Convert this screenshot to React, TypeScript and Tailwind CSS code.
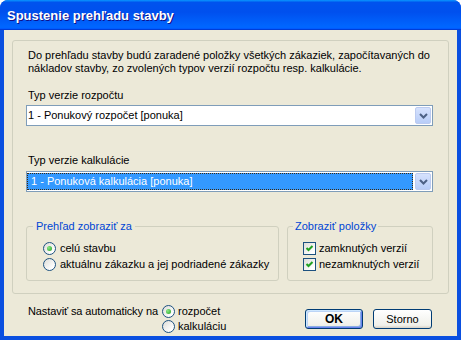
import React from 'react';

const Radio = ({ checked }: { checked?: boolean }) => (
  <span className="flex h-[13px] w-[13px] shrink-0 items-center justify-center rounded-full border border-[#1c5180] bg-[linear-gradient(135deg,#dcdcd7,#ffffff_80%)]">
    {checked && (
      <span className="h-[5px] w-[5px] rounded-full bg-[radial-gradient(circle_at_35%_35%,#8ae985,#21a121)]" />
    )}
  </span>
);

const Check = () => (
  <span className="flex h-[13px] w-[13px] shrink-0 items-center justify-center border border-[#1c5180] bg-[linear-gradient(135deg,#dcdcd7,#ffffff_80%)]">
    <svg width="9" height="9" viewBox="0 0 9 9">
      <path d="M1.5 4 L3.5 6 L7.5 2" stroke="#21a121" strokeWidth="2" fill="none" />
    </svg>
  </span>
);

const DropButton = () => (
  <div className="flex w-[16px] items-center justify-center rounded-[2px] border border-[#bccbf0] bg-[linear-gradient(180deg,#d6e2fd,#b8cdf8)]">
    <svg width="9" height="6" viewBox="0 0 9 6">
      <path d="M1 1 L4.5 4.5 L8 1" stroke="#4d6185" strokeWidth="2" fill="none" />
    </svg>
  </div>
);

const Combo = ({ text, selected }: { text: string; selected?: boolean }) => (
  <div className="flex h-[21px] items-stretch border border-[#7f9db9] bg-white py-[1px] pr-[1px]">
    {selected ? (
      <div className="mr-[2px] flex flex-1 items-center bg-[#3399ff] pl-[4px] text-white outline-1 outline-dotted outline-[#3d2a10] -outline-offset-1">
        {text}
      </div>
    ) : (
      <div className="mr-[2px] flex flex-1 items-center pl-[1px] text-black">{text}</div>
    )}
    <DropButton />
  </div>
);

export default function App() {
  return (
    <div className="flex h-[340px] w-[461px] flex-col rounded-t-[8px] bg-[#0a4fe0] font-['Liberation_Sans',Arial,sans-serif] text-[11px] leading-[13px] text-black">
      {/* Title bar */}
      <div className="flex h-[30px] items-center rounded-t-[8px] bg-[linear-gradient(180deg,#0997ff,#0053ee_8%,#0050ee_40%,#0066ff_88%,#0066ff_93%,#005bff_95%,#003dd7_96%,#003dd7)] pl-[7px]">
        <span className="text-[13px] font-bold text-white [text-shadow:1px_1px_#0f1089]">
          Spustenie prehľadu stavby
        </span>
      </div>

      {/* Body */}
      <div className="mx-[4px] mb-[4px] flex flex-1 flex-col bg-[#ece9d8] px-[8px] pt-[10px]">
        <div className="flex flex-col rounded-[3px] border border-[#d0d0bf] pb-[12px] pl-[13px] pr-[15px] pt-[8px]">
          <p className="pl-[2px]">
            Do prehľadu stavby budú zaradené položky všetkých zákaziek, započítavaných do
            <br />
            nákladov stavby, zo zvolených typov verzií rozpočtu resp. kalkulácie.
          </p>

          <div className="mt-[14px] pl-[2px]">Typ verzie rozpočtu</div>
          <div className="mt-[3px]">
            <Combo text="1 - Ponukový rozpočet [ponuka]" />
          </div>

          <div className="mt-[28px] pl-[2px]">Typ verzie kalkulácie</div>
          <div className="mt-[4px]">
            <Combo text="1 - Ponuková kalkulácia [ponuka]" selected />
          </div>

          <div className="mt-[28px] flex gap-[8px]">
            <fieldset className="w-[253px] rounded-[3px] border border-[#d0d0bf]">
              <legend className="ml-[6px] px-[3px] text-[#0046d5]">Prehľad zobraziť za</legend>
              <div className="pb-[8px] pl-[16px] pt-[7px]">
                <div className="flex h-[16px] items-center gap-[4px]">
                  <Radio checked />
                  <span>celú stavbu</span>
                </div>
                <div className="flex h-[16px] items-center gap-[4px]">
                  <Radio />
                  <span>aktuálnu zákazku a jej podriadené zákazky</span>
                </div>
              </div>
            </fieldset>
            <fieldset className="flex-1 rounded-[3px] border border-[#d0d0bf]">
              <legend className="ml-[5px] px-[2px] text-[#0046d5]">Zobraziť položky</legend>
              <div className="pb-[8px] pl-[15px] pt-[7px]">
                <div className="flex h-[16px] items-center gap-[3px]">
                  <Check />
                  <span>zamknutých verzií</span>
                </div>
                <div className="flex h-[16px] items-center gap-[3px]">
                  <Check />
                  <span>nezamknutých verzií</span>
                </div>
              </div>
            </fieldset>
          </div>
        </div>

        {/* Bottom row */}
        <div className="mt-[10px] flex items-start">
          <div className="flex h-[15px] w-[150px] items-center pl-[16px] tracking-[-0.1px]">Nastaviť sa automaticky na</div>
          <div className="flex flex-col">
            <div className="flex h-[15px] items-center gap-[3px]">
              <Radio checked />
              <span>rozpočet</span>
            </div>
            <div className="flex h-[15px] items-center gap-[3px]">
              <Radio />
              <span>kalkuláciu</span>
            </div>
          </div>
          <div className="ml-auto mr-[17px] mt-[5px] flex gap-[10px]">
            <button className="h-[20px] w-[58px] rounded-[3px] border border-[#003c74] bg-[linear-gradient(180deg,#ffffff,#f0f0ea_85%,#d6d0c5)] text-[12px] font-bold shadow-[inset_1px_1px_0_#cee7ff,inset_-1px_-1px_0_#6982ee,inset_2px_2px_0_#bcd4f6,inset_-2px_-2px_0_#89ade4]">
              OK
            </button>
            <button className="h-[20px] w-[59px] rounded-[3px] border border-[#003c74] bg-[linear-gradient(180deg,#ffffff,#f0f0ea_85%,#d6d0c5)] text-[11px]">
              Storno
            </button>
          </div>
        </div>
      </div>
    </div>
  );
}
